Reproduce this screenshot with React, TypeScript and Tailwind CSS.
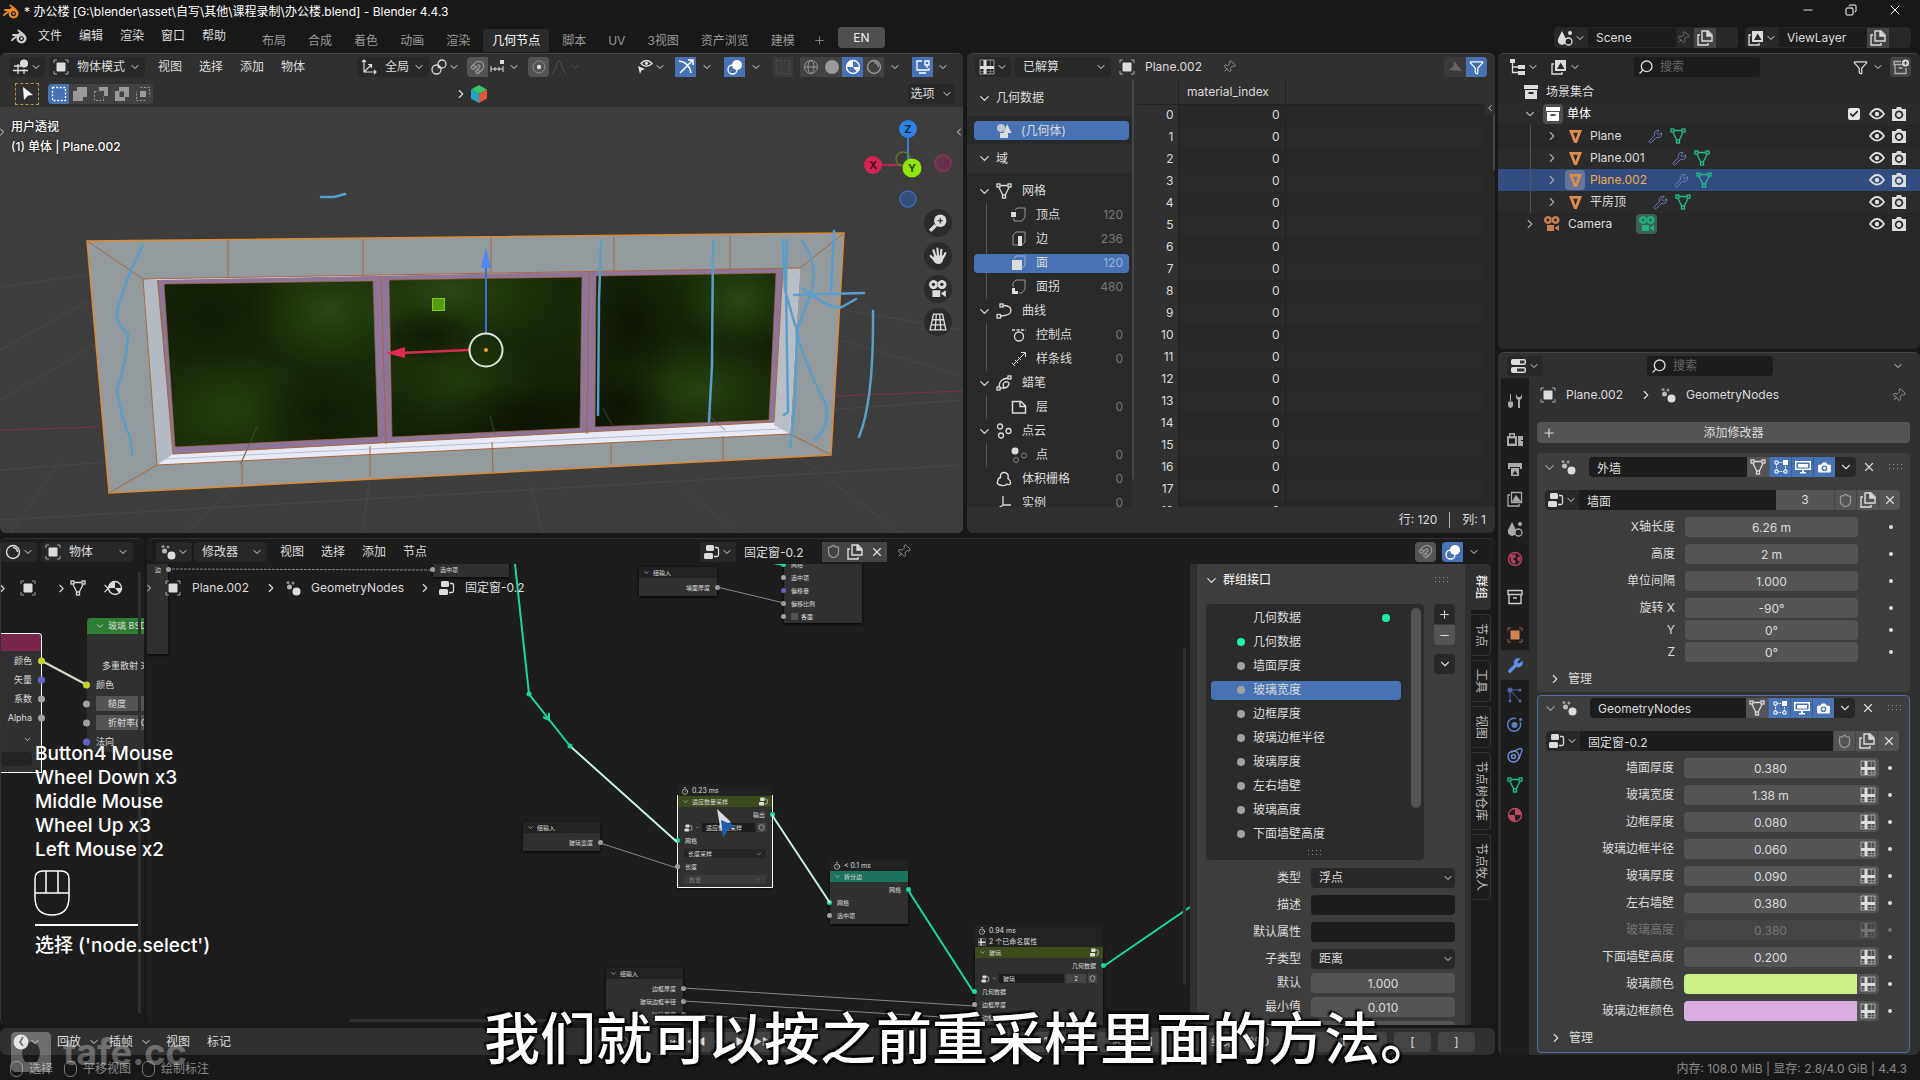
import { useId, type ReactNode } from 'react';
import {
  Camera, Check, ChevronDown, ChevronLeft, ChevronRight, Copy, Filter, Magnet, Minus, Pin,
  Plus, Search, Shield, Timer, Wrench, X,
} from 'lucide-react';

/* ---------- icons ---------- */

const GLYPHS: Record<string, ReactNode> = {
  object: (
    <>
      <path d="M1 4V1h3M12 1h3v3M15 12v3h-3M4 15H1v-3" fill="none" stroke="currentColor" opacity=".7" />
      <rect x="3.500" y="3.500" width="9" height="9" rx="1" />
    </>
  ),
  mesh: (
    <g fill="none" stroke="currentColor" strokeWidth="1.3">
      <path d="M4.5 2.5h7M3 4.500l4 8M13 4.500l-4 8" />
      <rect x="1" y="1" width="3" height="3" />
      <rect x="12" y="1" width="3" height="3" />
      <rect x="6.500" y="12" width="3" height="3" />
    </g>
  ),
  nodes: (
    <>
      <rect x="2" y="1" width="8" height="6" rx="1.500" />
      <rect x="0" y="9" width="9" height="6" rx="1.500" />
      <path d="M11 3.500h2q1.500 0 1.500 1.500v6q0 1.500-1.500 1.500h-3" fill="none" stroke="currentColor" strokeWidth="1.300" />
    </>
  ),
  geo: (
    <>
      <circle cx="3" cy="2.500" r="1.500" opacity=".6" />
      <circle cx="8" cy="3" r="1.500" opacity=".6" />
      <circle cx="4.500" cy="7" r="2.500" opacity=".8" />
      <circle cx="11.500" cy="11.500" r="4" />
    </>
  ),
  grid: (
    <>
      <path d="M1 1h14v14H1z" fill="none" stroke="currentColor" opacity=".6" />
      <path d="M1 12.500h14M11.500 1v14" fill="none" stroke="currentColor" opacity=".35" />
      <path d="M4.500 1h3v14h-3zM1 7h14v3H1z" />
    </>
  ),
  viewport: (
    <>
      <circle cx="11" cy="4.500" r="4" />
      <path d="M1 7h7M0 11.500h15M5 5v10M11 10v5" fill="none" stroke="currentColor" strokeWidth="1.300" />
    </>
  ),
  axes: (
    <path d="M3 1v12h12M3 13L10 6M1 3l2-2 2 2M13 11l2 2-2 2M7 5.500h3.500V9" fill="none" stroke="currentColor" strokeWidth="1.200" />
  ),
  pivot: (
    <g fill="none" stroke="currentColor" strokeWidth="1.300">
      <circle cx="5.500" cy="10.500" r="4.500" />
      <circle cx="11" cy="5" r="4" />
      <circle cx="8" cy="8" r=".8" fill="currentColor" />
    </g>
  ),
  snap: (
    <>
      <path d="M1 7v6M5 8v4M9 8v4M13 7v6M1 10h12" fill="none" stroke="currentColor" />
      <rect x="10" y="1" width="4" height="4" />
    </>
  ),
  target: (
    <>
      <circle cx="8" cy="8" r="6" fill="none" stroke="currentColor" opacity=".4" />
      <circle cx="8" cy="8" r="2.200" />
    </>
  ),
  falloff: <path d="M1 14C6 12 5 2 8 2s2 10 7 12" fill="none" stroke="currentColor" />,
  eyeCursor: (
    <>
      <path d="M4 4.500q5.500-6 11 0-5.500 5.500-11 0z" fill="none" stroke="currentColor" strokeWidth="1.400" />
      <circle cx="9.500" cy="4.300" r="1.600" />
      <path d="M1 7l7 3-3.500 1.500L3 15z" />
    </>
  ),
  gizmo: (
    <path d="M1 2q10 1 12 12M2 14L14 2M10 1h5v5" fill="none" stroke="currentColor" strokeWidth="1.500" />
  ),
  overlay: (
    <>
      <circle cx="10" cy="6" r="5" />
      <circle cx="5.500" cy="10.500" r="4.500" fill="none" stroke="currentColor" strokeWidth="1.300" />
    </>
  ),
  wire: (
    <g fill="none" stroke="currentColor">
      <circle cx="8" cy="8" r="6.500" />
      <ellipse cx="8" cy="8" rx="3" ry="6.500" />
      <path d="M1.500 8h13" />
    </g>
  ),
  solid: <circle cx="8" cy="8" r="7" />,
  matprev: (
    <>
      <circle cx="8" cy="8" r="6.500" fill="none" stroke="currentColor" strokeWidth="1.400" />
      <path d="M8 1.500v6.500H14.500A6.500 6.500 0 0 1 12 13L8 8H1.500A6.500 6.500 0 0 1 8 1.500z" />
    </>
  ),
  rendered: (
    <>
      <circle cx="8" cy="8" r="6.500" fill="none" stroke="currentColor" strokeWidth="1.400" />
      <path d="M8 3.500a5 5 0 0 1 4.500 4.500" fill="none" stroke="currentColor" strokeWidth="1.500" />
    </>
  ),
  screen: (
    <path d="M7 2H2v9h12V9M4 14h7M10 2h4v4h-4zM12 6v3" fill="none" stroke="currentColor" strokeWidth="1.300" />
  ),
  dashed: <rect x="1.500" y="1.500" width="13" height="13" fill="none" stroke="currentColor" strokeWidth="1.300" strokeDasharray="2 1.600" />,
  addSel: <path d="M5 1h10v10h-4v4H1V5h4z" />,
  subSel: (
    <>
      <path d="M6 1h9v9h-4V5H6z" />
      <path d="M1.500 5.500h4M1.500 5.500v9h9v-4" fill="none" stroke="currentColor" strokeDasharray="2 1.500" />
    </>
  ),
  xorSel: <path fillRule="evenodd" d="M5 1h10v10h-4v4H1V5h4zM5.500 5.500v5.500H10V5.500z" />,
  andSel: (
    <>
      <rect x="5" y="5" width="6" height="6" />
      <path d="M5.500 1.500h9v9M10.500 14.500h-9v-9" fill="none" stroke="currentColor" strokeDasharray="2 1.500" />
    </>
  ),
  cursor: <path d="M4 1l10 8-5 .5L5 14z" />,
  outliner: (
    <>
      <rect x="0" y="0" width="5" height="4" />
      <path d="M2.500 4v9.500H8M2.500 8H8" fill="none" stroke="currentColor" strokeWidth="1.300" />
      <rect x="8" y="6" width="7" height="4" />
      <rect x="8" y="12" width="7" height="4" />
    </>
  ),
  images: (
    <>
      <path d="M3 5H1v10h10v-2" fill="none" stroke="currentColor" strokeWidth="1.300" />
      <path fillRule="evenodd" d="M4 1h11v11H4zM6 10h7.500L9.700 3.500z" />
    </>
  ),
  imagesLine: (
    <g fill="none" stroke="currentColor" strokeWidth="1.300">
      <path d="M3 4H1v11h11v-2M4.500 1.500h10v10h-10z" />
      <path d="M6 10l3-5 4 5z" fill="currentColor" />
    </g>
  ),
  scene: (
    <>
      <path d="M5 1l4 8q1 5-4 6-5-1-4-6z" />
      <circle cx="13" cy="3" r="2" />
      <circle cx="11.500" cy="11.500" r="3.500" fill="#222" stroke="currentColor" strokeWidth="1.300" />
    </>
  ),
  collection: (
    <>
      <rect x="1" y="1" width="14" height="4" />
      <path fillRule="evenodd" d="M2 6h12v9H2zM5.500 8h5v2h-5z" />
    </>
  ),
  collectionLine: (
    <path d="M1 1.500h14v4H1zM2 5.500v9h12v-9M6 9h4" fill="none" stroke="currentColor" strokeWidth="1.400" />
  ),
  newCollection: (
    <>
      <path d="M8 2.500H1v3h8M2 5.500v9h11V9M5.500 9h4" fill="none" stroke="currentColor" strokeWidth="1.300" opacity=".7" />
      <circle cx="12.500" cy="4" r="3.500" />
      <path d="M10.500 4h4M12.500 2v4" stroke="#444" />
    </>
  ),
  meshObj: <path fillRule="evenodd" d="M1 1h14L9.500 15h-3zM5.500 4L8 11l2.500-7z" />,
  movie: (
    <>
      <path fillRule="evenodd" d="M4 0a4 4 0 1 0 .1 0zM4 2.500a1.500 1.500 0 1 1-.1 0zM11.500 0a4 4 0 1 0 .1 0zM11.500 2.500a1.500 1.500 0 1 1-.1 0z" />
      <path d="M3 9h7v6H3zM11 11.500l4-2.500v6l-4-2.500z" />
    </>
  ),
  photo: (
    <path fillRule="evenodd" d="M1 3h4l1-2h4l1 2h4v12H1zM8 4.500a4.200 4.200 0 1 0 .1 0zM8 6.300a2.500 2.500 0 1 1-.1 0z" />
  ),
  eye: (
    <>
      <path d="M1 8q7-10 14 0-7 9-14 0z" fill="none" stroke="currentColor" strokeWidth="1.800" />
      <circle cx="8" cy="8" r="2.200" />
    </>
  ),
  hand: (
    <>
      <path d="M5.500 8L4 3M8 7.500L7.500 1.500M10.500 8L11 2.500M12.500 9.500L14.500 5.500M4.500 11L1.500 8" fill="none" stroke="currentColor" strokeWidth="1.900" strokeLinecap="round" />
      <path d="M4.500 7.500h8.500l-.5 4q-1 3.500-4 3.500-3.500 0-5-4z" />
    </>
  ),
  props: (
    <>
      <rect x="0" y="1" width="15" height="6" rx="2" />
      <rect x="0" y="9" width="15" height="6" rx="2" />
      <path d="M9 2.500h4.500v3H9zM6 10.500h7.500v3H6z" fill="#333" />
    </>
  ),
  tool: (
    <>
      <path d="M3.500 1v7M1.500 9h4v4l-2 2-2-2z" stroke="currentColor" />
      <path d="M9 1v4l2 2v8h2V7l2-2V1l-1.500 3h-3z" />
    </>
  ),
  render: (
    <path fillRule="evenodd" d="M0 5h2V2h6v3h2v10H0zM3.500 3.500V5h3V3.500zM2 7.500v5h6v-5zM11 5h5v4h-2v1h2v5h-5z" />
  ),
  output: (
    <path fillRule="evenodd" d="M1 2h14v6h-2V6H3v2H1zM4 7h8v8H4zM5.500 13.500h5L8 9.500z" />
  ),
  world: (
    <>
      <circle cx="8" cy="8" r="6.500" fill="none" stroke="currentColor" strokeWidth="1.500" />
      <path d="M3 4l5-1 1 3-3 2 3 2-2 4-3-4zM11 5l3 2-2 4-2-3z" />
    </>
  ),
  square: (
    <>
      <path d="M1 4V1h3M12 1h3v3M15 12v3h-3M4 15H1v-3" fill="none" stroke="currentColor" opacity=".7" />
      <rect x="3.500" y="3.500" width="9" height="9" />
    </>
  ),
  particles: (
    <>
      <path d="M3 3h9M3 3v10M3 3l9 10" fill="none" stroke="currentColor" />
      <circle cx="3" cy="3" r="2.500" />
      <circle cx="13" cy="3" r="1.500" />
      <circle cx="3" cy="14" r="1.500" />
      <circle cx="13" cy="14" r="1.500" />
    </>
  ),
  physics: (
    <>
      <path d="M13 5a6.500 6.500 0 1 1-4-3.500" fill="none" stroke="currentColor" strokeWidth="1.400" />
      <circle cx="7.500" cy="8" r="3" />
      <circle cx="13.500" cy="2.500" r="1.500" />
    </>
  ),
  constraint: (
    <>
      <path d="M4 5.500L13 1.500q2 0 2 2L12 12" fill="none" stroke="currentColor" strokeWidth="1.300" />
      <circle cx="6.500" cy="9.500" r="5.500" fill="none" stroke="currentColor" strokeWidth="1.400" />
      <circle cx="6.500" cy="9.500" r="2" fill="none" stroke="currentColor" strokeWidth="1.600" />
    </>
  ),
  material: (
    <>
      <circle cx="8" cy="8" r="6.500" fill="none" stroke="currentColor" strokeWidth="1.300" />
      <path d="M8 8V1.500A6.500 6.500 0 0 1 14.500 8zM8 8v6.500A6.500 6.500 0 0 1 1.500 8z" />
    </>
  ),
  editMode: (
    <>
      <path d="M3.500 5v6M5 12.500h6M12.500 11V6M5 3.500h4" fill="none" stroke="currentColor" strokeDasharray="1.500 1" />
      <path d="M2 2h3v3H2zM2 11h3v3H2zM11 11h3v3h-3z" fill="none" stroke="currentColor" />
      <rect x="10" y="1" width="5" height="5" />
    </>
  ),
  monitor: <path fillRule="evenodd" d="M0 2h16v9H0zM1.500 3.500v6h13v-6zM3 5h10v3.500H3zM5 13h6v1.500H5zM7 11h2v2H7z" />,
  duplicate: (
    <g fill="none" stroke="currentColor" strokeWidth="1.400">
      <path d="M5 1h6l4 4v6H5z" />
      <path d="M10 1v5h5" fill="currentColor" />
      <path d="M3 5H1v10h10v-2" />
    </g>
  ),
  shapes: (
    <>
      <circle cx="5" cy="5" r="4" opacity=".8" />
      <path d="M11 1l4.500 9h-8z" />
      <path d="M4 10h8v5H4z" />
    </>
  ),
  vert: (
    <>
      <path d="M4 3l2-2h8v9l-3 4H3v-3" fill="none" stroke="currentColor" opacity=".6" />
      <rect x="0" y="5" width="5" height="5" />
    </>
  ),
  edge: (
    <>
      <path d="M2 14V4l3-3h9v10l-3 3z" fill="none" stroke="currentColor" opacity=".6" />
      <rect x="7" y="5" width="4" height="10" />
    </>
  ),
  face: (
    <>
      <path d="M3 4l2-3h9v9l-2 3" fill="none" stroke="currentColor" opacity=".6" />
      <rect x="1" y="5" width="10" height="10" />
    </>
  ),
  corner: (
    <>
      <path d="M2 8V4l3-3h9v9l-3 4H8" fill="none" stroke="currentColor" opacity=".6" />
      <path d="M1 9h3v3h3v3H1z" />
    </>
  ),
  curve: (
    <g fill="none" stroke="currentColor" strokeWidth="1.300">
      <path d="M7 2.500q8 0 8 5t-10 5.500" />
      <rect x="4" y="1" width="3" height="3" />
      <rect x="1" y="11.500" width="3.500" height="3.500" />
    </g>
  ),
  control: (
    <g fill="none" stroke="currentColor" strokeWidth="1.300">
      <circle cx="8" cy="9.500" r="4.500" />
      <path d="M1 3h14" strokeDasharray="3 1.500" />
    </g>
  ),
  spline: <path d="M2 14L14 2M10 1.500h4.500V6M4 9l3 3M1 12l3 3M7 6l3 3" fill="none" stroke="currentColor" />,
  pencil: (
    <g fill="none" stroke="currentColor" strokeWidth="1.300">
      <path d="M3 12C3 6 6 4 12 3M4 13q8 1 9-4 0-3-4-2-3 1-1 6" />
      <rect x="12" y="1" width="3" height="3" />
      <rect x="1" y="12" width="3" height="3" />
    </g>
  ),
  layer: <path d="M1.500 2.500H10l4.500 4.500v7h-13zM9 2.500v5h5" fill="none" stroke="currentColor" strokeWidth="1.500" />,
  cloud: (
    <g fill="none" stroke="currentColor" strokeWidth="1.300">
      <circle cx="4" cy="3.500" r="2.500" />
      <circle cx="12.500" cy="8" r="2.500" />
      <circle cx="5" cy="12.500" r="2.500" />
    </g>
  ),
  point: (
    <>
      <circle cx="4" cy="4" r="3.500" />
      <g fill="none" stroke="currentColor" opacity=".5">
        <circle cx="13" cy="8.500" r="2.500" />
        <circle cx="5" cy="13" r="2.500" />
      </g>
    </>
  ),
  volume: (
    <path d="M4 14q-4-1-2-4.500Q2 7 4.500 6.500 4 1 9 1.500q4 1 3 6 3 2 2.500 5-1 2-3.500.5-1 2.500-7 1z" fill="none" stroke="currentColor" strokeWidth="1.400" />
  ),
  instance: <path d="M7 1v9M7 10h8M7 10l-6 4" fill="none" stroke="currentColor" strokeWidth="1.300" />,
  zoom: (
    <>
      <circle cx="10" cy="6" r="5.500" />
      <path d="M6 10l-5 5" stroke="currentColor" strokeWidth="3" />
      <path d="M7.500 6h5M10 3.500v5" stroke="#222" />
    </>
  ),
  persp: <path d="M4 1h8l3 14H1zM3 6h10M2 10.500h12M6.500 1L5.500 15M9.500 1l1 14" fill="none" stroke="currentColor" strokeWidth="1.200" />,
  blender: (
    <>
      <path d="M1 11L9 4.500M2 6h8M7.500 1.500l5 4" fill="none" stroke="currentColor" strokeWidth="2" strokeLinecap="round" />
      <path fillRule="evenodd" d="M10.500 4.500a5 5 0 1 0 .1 0zM10.500 7.200a2.500 2.500 0 1 1-.1 0z" />
      <circle cx="10.500" cy="9.600" r="1.300" />
    </>
  ),
  clock: (
    <>
      <circle cx="8" cy="8" r="7.500" />
      <path d="M10 3L7 8l3 4" fill="none" stroke="#333" strokeWidth="1.800" />
    </>
  ),
};

function Icon({ name, className = '' }: { name: string; className?: string }) {
  return (
    <svg viewBox="0 0 16 16" className={`h-4 w-4 shrink-0 ${className}`} fill="currentColor" aria-hidden="true">
      {GLYPHS[name]}
    </svg>
  );
}

const Down = () => <ChevronDown size={12} strokeWidth={2} className="pointer-events-none shrink-0" aria-hidden="true" />;

function Grip() {
  return (
    <svg width="14" height="6" className="shrink-0 text-[#8a8a8a]" fill="currentColor" aria-hidden="true">
      {[0, 4, 8, 12].map((x) => (
        <g key={x}>
          <rect x={x} y="0" width="1" height="1" />
          <rect x={x} y="4" width="1" height="1" />
        </g>
      ))}
    </svg>
  );
}

/* ---------- controls ---------- */

function IconButton({ label, children, className = '' }: { label: string; children: ReactNode; className?: string }) {
  return (
    <button type="button" aria-label={label} className={`flex h-5 shrink-0 items-center justify-center ${className}`}>
      {children}
    </button>
  );
}

function EditorType({ icon, label }: { icon: string; label: string }) {
  return (
    <IconButton label={label} className="w-9 gap-px rounded bg-[#282828]">
      <Icon name={icon} />
      <Down />
    </IconButton>
  );
}

function Dropdown({ label, value, icon, className = '' }: { label: string; value: string; icon?: string; className?: string }) {
  return (
    <div className={`flex h-5 items-center gap-1 rounded bg-[#282828] px-1 ${className}`}>
      {icon && <Icon name={icon} />}
      <select aria-label={label} className="min-w-0 flex-1 appearance-none bg-transparent pl-1 outline-none">
        <option>{value}</option>
      </select>
      <Down />
    </div>
  );
}

function MenuItems({ items }: { items: string[] }) {
  return (
    <nav className="flex shrink-0 gap-[17px] whitespace-nowrap">
      {items.map((item) => (
        <button key={item} type="button">{item}</button>
      ))}
    </nav>
  );
}

/* ---------- top bars ---------- */

function TitleBar() {
  return (
    <header className="flex h-6 items-center bg-[#181818] text-white">
      <Icon name="blender" className="ml-[3px] text-[#ea8a2a]" />
      <h1 className="ml-[5px] flex-1 text-xs font-normal">* 办公楼 [G:\blender\asset\自写\其他\课程录制\办公楼.blend] - Blender 4.4.3</h1>
      <div className="flex items-center gap-[30px] pr-[17px] pb-1">
        <button type="button" aria-label="最小化"><Minus size={14} strokeWidth={1.500} /></button>
        <button type="button" aria-label="还原"><Copy size={12} className="-scale-x-100" /></button>
        <button type="button" aria-label="关闭"><X size={16} strokeWidth={1.500} /></button>
      </div>
    </header>
  );
}

const WORKSPACES = ['布局', '合成', '着色', '动画', '渲染', '几何节点', '脚本', 'UV', '3视图', '资产浏览', '建模'];

function TopBar() {
  return (
    <div className="flex h-[29px] items-start bg-[#181818] pt-[3px]">
      <Icon name="blender" className="mt-0.5 mr-3 ml-[10px] !w-[18px] text-[#ccc]" />
      <div className="-ml-[2px] pt-px">
        <MenuItems items={['文件', '编辑', '渲染', '窗口', '帮助']} />
      </div>
      <div className="ml-[27px] flex h-[25px] items-end gap-[4px] text-[#999]">
        {WORKSPACES.map((name) => (
          <button
            key={name}
            type="button"
            className={name === '几何节点' ? 'h-[23px] rounded-t bg-[#2b2b2b] px-[9px] whitespace-nowrap text-white' : 'h-[23px] px-[9px] whitespace-nowrap'}
          >
            {name}
          </button>
        ))}
        <button type="button" aria-label="添加工作区" className="flex h-[23px] w-6 items-center justify-center"><Plus size={13} strokeWidth={1.500} /></button>
      </div>
      <button type="button" className="ml-[6px] h-[21px] w-[47px] rounded bg-[#4f4f4f] text-[#eee]">EN</button>
      <div className="ml-auto flex gap-[7px] pr-[9px]">
        <div className="flex h-[21px] items-center rounded bg-[#282828]">
          <IconButton label="场景" className="w-[34px] gap-px"><Icon name="scene" /><Down /></IconButton>
          <input aria-label="场景名称" defaultValue="Scene" className="h-[19px] w-[88px] bg-[#1d1d1d] px-2 outline-none" />
          <Pin size={14} strokeWidth={1.500} className="rotate-45 text-[#777]" />
          <IconButton label="新建场景" className="ml-[4px] w-[22px] bg-[#444]"><Icon name="duplicate" /></IconButton>
          <span className="w-[22px]" />
        </div>
        <div className="flex h-[21px] items-center rounded bg-[#282828]">
          <IconButton label="视图层" className="w-[34px] gap-px"><Icon name="images" /><Down /></IconButton>
          <input aria-label="视图层名称" defaultValue="ViewLayer" className="h-[19px] w-[88px] bg-[#1d1d1d] px-2 outline-none" />
          <IconButton label="新建视图层" className="w-[22px] bg-[#444]"><Icon name="duplicate" /></IconButton>
          <span className="w-[22px]" />
        </div>
      </div>
    </div>
  );
}

/* ---------- 3D viewport ---------- */

function Scene() {
  return (
    <svg viewBox="0 107 963 426" preserveAspectRatio="xMidYMid slice" className="absolute inset-0 h-full w-full" aria-label="固定窗模型">
      <defs>
        <linearGradient id="glassA" x1="0" y1="0" x2="1" y2="1">
          <stop offset="0" stopColor="#142006" />
          <stop offset=".45" stopColor="#182a08" />
          <stop offset=".75" stopColor="#101a04" />
          <stop offset="1" stopColor="#182a08" />
        </linearGradient>
        <radialGradient id="leaf">
          <stop offset="0" stopColor="#2a4713" />
          <stop offset="1" stopColor="#2a4713" stopOpacity="0" />
        </radialGradient>
        <radialGradient id="shade">
          <stop offset="0" stopColor="#0c1203" />
          <stop offset="1" stopColor="#0c1203" stopOpacity="0" />
        </radialGradient>
        <clipPath id="panes">
          <path d="M164 284L373 281 378 437 175 447zM389 280L582 277 580 428 392 437zM596 276L776 273 769 420 595 427z" />
        </clipPath>
      </defs>
      <rect x="-400" y="107" width="1800" height="426" fill="#3d3d3d" />
      <g stroke="#484848" fill="none">
        <path d="M0 287L87 275M0 470L963 400M0 520L963 465M60 460L10 533M242 480L185 533M370 478L362 533M530 484L543 533M675 480L737 533M790 450L900 533M840 340L963 376M845 310L963 330M0 400L95 345M0 350L90 300" />
      </g>
      <path d="M0 430L100 427M836 396L963 391" stroke="#7d3345" />
      <path d="M87 241L844 233 831 455 109 493z" fill="#949b9e" />
      <path d="M143 279L800 268 790 434 157 465z" fill="#e8eaf5" />
      <path d="M143 279L158 280 173 454 157 465z" fill="#b3bac2" />
      <path d="M783 268L800 268 790 434 774 425z" fill="#b9bdc6" />
      <path d="M157 280L783 268 774 422 173 454z" fill="#8d769a" />
      <g clipPath="url(#panes)">
        <rect x="150" y="270" width="640" height="190" fill="url(#glassA)" />
        <ellipse cx="330" cy="310" rx="80" ry="60" fill="url(#leaf)" />
        <ellipse cx="230" cy="410" rx="90" ry="60" fill="url(#leaf)" opacity=".7" />
        <ellipse cx="450" cy="290" rx="110" ry="55" fill="url(#leaf)" />
        <ellipse cx="460" cy="380" rx="80" ry="50" fill="url(#leaf)" opacity=".6" />
        <ellipse cx="700" cy="390" rx="110" ry="60" fill="url(#leaf)" opacity=".9" />
        <ellipse cx="740" cy="300" rx="60" ry="50" fill="url(#leaf)" />
        <ellipse cx="210" cy="320" rx="70" ry="50" fill="url(#shade)" opacity=".5" />
        <ellipse cx="320" cy="410" rx="70" ry="45" fill="url(#shade)" opacity=".6" />
        <ellipse cx="430" cy="335" rx="50" ry="30" fill="url(#shade)" opacity=".7" />
        <ellipse cx="630" cy="320" rx="55" ry="80" fill="url(#shade)" opacity=".9" />
        <ellipse cx="530" cy="415" rx="80" ry="35" fill="url(#shade)" opacity=".8" />
        <ellipse cx="620" cy="405" rx="50" ry="40" fill="url(#shade)" />
      </g>
      <path d="M165 459L780 429" stroke="#b6bfd8" />
      <g stroke="#a5673c" fill="none">
        <path d="M164 284L373 281 378 437 175 447zM389 280L582 277 580 428 392 437zM596 276L776 273 769 420 595 427z" opacity=".7" />
        <path d="M143 279L800 268M143 279L157 465 790 434M158 280L173 454 774 422 783 268M381 276L386 444M589 273L587 434" />
        <path d="M87 241L143 279M844 233L800 268M831 455L790 434M109 493L157 465M228 240V277M363 239V275M491 238V272M614 237V271M730 236V269M247 450L242 461V485M370 446V477M492 442L493 472M611 443V464M723 436V460" />
      </g>
      <path d="M87 241L844 233 831 455 109 493z" fill="none" stroke="#d98a35" strokeWidth="1.500" />
      <path d="M257 427L240 465M490 416L495 435M603 408L612 425M705 412L725 430" stroke="#5d5d50" opacity=".6" />
      <g stroke="#5a9fca" strokeWidth="2.500" fill="none" strokeLinecap="round" strokeLinejoin="round">
        <path d="M143 245Q125 280 116 315 119 326 128 334 127 360 117 390 120 415 131 440L132 455" />
        <path d="M601 241L599 300 598 415M713 241L712 365 709 422M783 240L785 290 795 325M787 240L786 290 788 412 784 415" />
        <path d="M802 241Q820 265 810 295L797 330 795 400 790 448M834 231L831 290" />
        <path d="M794 295L864 293M802 288Q830 310 842 307L856 299M796 325Q798 350 826 405 830 425 815 440M873 311Q874 400 859 437M321 197L334 197 345 194" />
      </g>
      <path d="M486 333V266" stroke="#3b6fc9" strokeWidth="2" />
      <path d="M486 248L491 268H481z" fill="#4f86f7" />
      <path d="M469 350L400 353" stroke="#d42a50" strokeWidth="2.500" />
      <path d="M386 353L405 347V358z" fill="#e02a50" />
      <rect x="432.500" y="298.500" width="12" height="12" fill="#569c10" stroke="#7ecb22" />
      <circle cx="486" cy="350" r="16.500" fill="none" stroke="#dfe5dc" strokeWidth="2" />
      <circle cx="486" cy="350" r="2" fill="#f29a3c" />
    </svg>
  );
}

function AxisGizmo() {
  return (
    <svg viewBox="860 116 96 96" className="h-24 w-24 font-bold" fontSize="11" textAnchor="middle">
      <path d="M908 138V168" stroke="#3a7fd0" strokeWidth="2" />
      <path d="M882 165H912" stroke="#b02850" strokeWidth="2" />
      <circle cx="903" cy="159" r="7" fill="none" stroke="#5f7a2a" strokeWidth="1.500" />
      <circle cx="943" cy="163" r="8" fill="#66304a" stroke="#8a3556" strokeWidth="1.500" />
      <circle cx="908" cy="199" r="8" fill="#34507a" stroke="#3a6bb0" strokeWidth="1.500" />
      <circle cx="908" cy="129" r="9" fill="#2f82e0" />
      <circle cx="873" cy="165" r="9" fill="#d42456" />
      <circle cx="912" cy="168" r="9.500" fill="#8ee60c" />
      <text x="908" y="133" fill="#0c2746">Z</text>
      <text x="873" y="169" fill="#4b0a1c">X</text>
      <text x="912" y="172" fill="#2a4703">Y</text>
    </svg>
  );
}

function ShadeButton({ icon, label, on = false }: { icon: string; label: string; on?: boolean }) {
  return (
    <IconButton label={label} className={on ? 'w-[21px] bg-[#4772b3] text-white' : 'w-[21px] bg-[#424242] text-[#999]'}>
      <Icon name={icon} />
    </IconButton>
  );
}

const NAV_BUTTONS = [
  { icon: 'zoom', label: '缩放' },
  { icon: 'hand', label: '平移' },
  { icon: 'movie', label: '摄像机视图' },
  { icon: 'persp', label: '透视/正交' },
];

function Viewport() {
  return (
    <section className="flex min-w-0 flex-[963] flex-col overflow-hidden rounded-md bg-[#3d3d3d]">
      <div className="border-t border-[#454545] bg-[#303030]">
        <div className="flex h-[26px] items-center pr-[10px] pl-[9px]">
          <EditorType icon="viewport" label="3D 视图" />
          <Dropdown label="模式" value="物体模式" icon="object" className="mr-[13px] ml-[4px] w-[96px]" />
          <MenuItems items={['视图', '选择', '添加', '物体']} />
          <div className="ml-[52px] flex items-center">
            <Dropdown label="变换坐标系" value="全局" icon="axes" className="w-[72px]" />
            <IconButton label="轴心点" className="w-[32px] gap-px"><Icon name="pivot" /><Down /></IconButton>
            <IconButton label="吸附" className="ml-[6px] w-[21px] rounded-l bg-[#545454] text-[#999]"><Magnet size={15} /></IconButton>
            <IconButton label="吸附至" className="mr-[6px] w-[34px] gap-0.5"><Icon name="snap" /><Down /></IconButton>
            <IconButton label="衰减编辑" className="w-[21px] rounded bg-[#545454]"><Icon name="target" /></IconButton>
            <IconButton label="衰减类型" className="w-[34px] gap-0.5 text-[#555]"><Icon name="falloff" /><Down /></IconButton>
          </div>
          <div className="ml-auto flex items-center">
            <IconButton label="可选性与可见性" className="mr-[6px] w-[36px] gap-px"><Icon name="eyeCursor" /><Down /></IconButton>
            <ShadeButton icon="gizmo" label="显示 Gizmo" on />
            <IconButton label="Gizmo 选项" className="mr-[7px] w-[21px]"><Down /></IconButton>
            <ShadeButton icon="overlay" label="显示叠加层" on />
            <IconButton label="叠加层选项" className="mr-[7px] w-[21px]"><Down /></IconButton>
            <IconButton label="透视模式" className="mr-[7px] w-5 bg-[#3a3a3a] text-[#4c4c4c]"><Icon name="dashed" /></IconButton>
            <ShadeButton icon="wire" label="线框" />
            <ShadeButton icon="solid" label="实体" />
            <ShadeButton icon="matprev" label="材质预览" on />
            <ShadeButton icon="rendered" label="渲染" />
            <IconButton label="着色选项" className="mr-[6px] w-[22px]"><Down /></IconButton>
            <ShadeButton icon="screen" label="同步" on />
            <IconButton label="同步选项" className="w-5"><Down /></IconButton>
          </div>
        </div>
        <div className="flex h-[27px] items-center pr-[8px] pl-4">
          <IconButton label="框选工具" className="w-[22px] outline-1 outline-dashed outline-[#b8923c]"><Icon name="cursor" className="text-white" /></IconButton>
          <div className="ml-[10px] flex overflow-hidden rounded">
            <ShadeButton icon="dashed" label="设置选择" on />
            <ShadeButton icon="addSel" label="扩展选择" />
            <ShadeButton icon="subSel" label="减去选择" />
            <ShadeButton icon="xorSel" label="反转选择" />
            <ShadeButton icon="andSel" label="相交选择" />
          </div>
          <ChevronRight size={14} className="ml-[301px]" />
          <svg width="16" height="18" viewBox="0 0 16 18" className="ml-[3px]" aria-hidden="true">
            <path d="M8 0l8 4.500L8 9 0 4.500z" fill="#35c46a" />
            <path d="M0 4.500L8 9v9l-8-4.500z" fill="#23a6c0" />
            <path d="M16 4.500L8 9v9l8-4.500z" fill="#e2553a" />
          </svg>
          <button type="button" className="ml-auto flex h-5 w-[47px] items-center justify-center gap-[6px] rounded bg-[#282828] whitespace-nowrap">选项<Down /></button>
        </div>
      </div>
      <div className="relative min-h-0 flex-1">
        <Scene />
        <div className="absolute top-[10px] left-[11px] font-medium text-white [text-shadow:0_0_2px_#000]">
          <p className="leading-5">用户透视</p>
          <p className="leading-5">(1) 单体 | Plane.002</p>
        </div>
        <div className="absolute top-[9px] right-[7px]"><AxisGizmo /></div>
        <div className="absolute top-[102px] right-[11px] flex flex-col gap-[5px]">
          {NAV_BUTTONS.map((b) => (
            <button key={b.icon} type="button" aria-label={b.label} className="flex h-7 w-7 items-center justify-center rounded-full bg-[#2b2b2b]">
              <Icon name={b.icon} className="!h-[18px] !w-[18px]" />
            </button>
          ))}
        </div>
        <ChevronRight size={12} className="absolute top-[19px] -left-1" />
        <ChevronLeft size={12} className="absolute top-[19px] -right-0.5" />
      </div>
    </section>
  );
}

/* ---------- spreadsheet ---------- */

const DOMAINS: { label: string; icon: string; count?: number; child?: boolean }[] = [
  { label: '网格', icon: 'mesh' },
  { label: '顶点', icon: 'vert', count: 120, child: true },
  { label: '边', icon: 'edge', count: 236, child: true },
  { label: '面', icon: 'face', count: 120, child: true },
  { label: '面拐', icon: 'corner', count: 480, child: true },
  { label: '曲线', icon: 'curve' },
  { label: '控制点', icon: 'control', count: 0, child: true },
  { label: '样条线', icon: 'spline', count: 0, child: true },
  { label: '蜡笔', icon: 'pencil' },
  { label: '层', icon: 'layer', count: 0, child: true },
  { label: '点云', icon: 'cloud' },
  { label: '点', icon: 'point', count: 0, child: true },
  { label: '体积栅格', icon: 'volume', count: 0 },
  { label: '实例', icon: 'instance', count: 0 },
];

function Spreadsheet() {
  const rows = Array.from({ length: 19 }, (_, i) => i);
  return (
    <section className="flex min-w-0 flex-[528] flex-col overflow-hidden rounded-md border-t border-[#454545] bg-[#303030]">
      <div className="flex h-[26px] shrink-0 items-center pr-2 pl-2">
        <EditorType icon="grid" label="电子表格" />
        <Dropdown label="求值状态" value="已解算" className="mr-2 ml-[4px] w-[96px]" />
        <Icon name="object" />
        <span className="ml-[10px]">Plane.002</span>
        <Pin size={14} strokeWidth={1.500} className="ml-5 rotate-45 text-[#999]" />
        <IconButton label="仅选中项" className="ml-auto w-[22px] rounded-l bg-[#3a3a3a] text-[#666]"><Icon name="cursor" className="-scale-x-100 rotate-90" /></IconButton>
        <IconButton label="启用过滤" className="w-[21px] rounded-r bg-[#4772b3] text-white"><Filter size={15} /></IconButton>
      </div>
      <div className="flex min-h-0 flex-1">
        <aside className="w-[165px] shrink-0 overflow-hidden">
          <button type="button" className="flex h-9 items-center gap-1 pl-[10px]"><ChevronDown size={15} />几何数据</button>
          <div className="bg-[#2a2a2a] px-[7px] pt-[5px] pb-1">
            <button type="button" className="flex h-[19px] w-[155px] items-center gap-[9px] rounded-sm bg-[#4772b3] pl-[22px]"><Icon name="shapes" />(几何体)</button>
          </div>
          <button type="button" className="flex h-[29px] items-center gap-1 pl-[10px]"><ChevronDown size={15} />域</button>
          <ul className="bg-[#2a2a2a] pt-[6px] pl-[7px]">
            {DOMAINS.map((d) => (
              <li key={d.label} className={d.child ? 'ml-3 flex h-6 items-center border-l border-[#555]' : 'flex h-6 items-center'}>
                <button
                  type="button"
                  className={`flex h-[19px] items-center rounded-sm pr-[6px] text-left ${d.label === '面' ? 'bg-[#4772b3]' : ''} ${d.child ? '-ml-[13px] w-[155px] pl-[37px]' : 'w-[155px] pl-[3px]'}`}
                >
                  {!d.child && (d.count === undefined ? <ChevronDown size={15} className="mr-[4px]" /> : <span className="w-[19px]" />)}
                  <Icon name={d.icon} className={d.child ? 'mr-[9px]' : 'mr-[10px]'} />
                  <span className="flex-1">{d.label}</span>
                  {d.count !== undefined && <span className={d.label === '面' ? 'text-[#9db4d8]' : 'text-[#777]'}>{d.count}</span>}
                </button>
              </li>
            ))}
          </ul>
        </aside>
        <div className="mr-[3px] mb-7 w-[2px] shrink-0 bg-[#454545]" />
        <div className="min-w-0 flex-1 overflow-hidden bg-[#282828]">
          <table className="w-full table-fixed border-collapse text-right">
            <thead>
              <tr className="h-6 border-b border-[#222] bg-[#303030]">
                <th className="w-[41px]" aria-label="索引" />
                <th className="w-[107px] border-x border-[#222] pr-[7px] text-center font-normal">material_index</th>
                <th aria-label="空" />
              </tr>
            </thead>
            <tbody>
              {rows.map((i) => (
                <tr key={i} className="h-[22px] odd:bg-[#282828] even:bg-[#2a2a2a]">
                  <th scope="row" className="bg-[#303030] pr-[4px] font-normal">{i}</th>
                  <td className="border-x border-[#222] pr-[5px]">0</td>
                  <td />
                </tr>
              ))}
            </tbody>
          </table>
        </div>
        <div className="w-[10px] shrink-0 bg-[#282828]">
          <div className="flex h-[34px] items-end justify-center bg-[#303030]"><ChevronLeft size={12} /></div>
          <div className="ml-auto h-14 w-[2px] bg-[#454545]" />
        </div>
      </div>
      <footer className="flex h-[26px] shrink-0 items-center justify-end gap-3 pr-[9px]">
        <span>行: 120</span><span className="h-4 w-px bg-[#aaa]" /><span>列: 1</span>
      </footer>
    </section>
  );
}

/* ---------- shader editor ---------- */

function Socket({ color, side }: { color: string; side: 'left' | 'right' }) {
  return (
    <i
      className={`absolute top-1/2 h-[7px] w-[7px] -translate-y-1/2 rounded-full ${side === 'left' ? '-left-[4px]' : '-right-[4px]'}`}
      style={{ background: color }}
    />
  );
}

function ShaderEditor() {
  return (
    <section className="relative flex w-36 shrink-0 flex-col overflow-hidden rounded-md border-t border-l border-[#333] bg-[#1d1d1d]">
      <div className="flex h-[25px] shrink-0 items-center">
        <EditorType icon="rendered" label="着色器编辑器" />
        <Dropdown label="着色器类型" value="物体" icon="object" className="ml-[4px] w-[92px]" />
      </div>
      <div className="relative min-h-0 flex-1">
        <div className="flex h-[48px] items-center overflow-hidden">
          <ChevronRight size={13} className="-ml-[5px] shrink-0" />
          <Icon name="object" className="ml-[11px]" />
          <ChevronRight size={13} className="ml-[19px] shrink-0" />
          <Icon name="mesh" className="ml-[2px]" />
          <ChevronRight size={13} className="ml-[14px] shrink-0" />
          <Icon name="matprev" className="-ml-[6px]" />
        </div>
        <svg className="absolute inset-0 h-full w-full" aria-hidden="true">
          <path d="M41 97L86 121" stroke="#d8d8c8" strokeWidth="2" />
        </svg>
        <div className="absolute top-[69px] left-0 h-[140px] w-[41px] rounded-tr border border-l-0 border-white bg-[#303030] text-[9px]">
          <div className="h-[17px] rounded-tr bg-[#79264a]" />
          {[['颜色', '#c7d22c'], ['矢量', '#6363c7'], ['系数', '#a1a1a1'], ['Alpha', '#a1a1a1']].map(([t, c]) => (
            <div key={t} className="relative h-[19px] pr-[9px] text-right leading-[19px]">{t}<Socket color={c} side="right" /></div>
          ))}
          <ChevronDown size={9} className="mt-[8px] mr-[9px] ml-auto" />
          <div className="mt-2 mr-[9px] h-[14px] rounded-sm bg-[#242424]" />
        </div>
        <div className="absolute top-[54px] left-[86px] h-[134px] w-[80px] rounded-tl bg-[#303030] text-[9px] whitespace-nowrap">
          <div className="flex h-4 items-center gap-[3px] rounded-tl bg-[#2f7d33] pl-2"><ChevronDown size={10} />玻璃 BSDF</div>
          <div className="mt-[22px] h-[19px] pl-[15px] leading-[19px]">多重散射GGX</div>
          <div className="relative h-[19px] pl-[9px] leading-[19px]">颜色<Socket color="#c7d22c" side="left" /></div>
          {['糙度', '折射率(IOR)'].map((t) => (
            <div key={t} className="relative h-[19px] py-[2px] pl-[9px]"><div className="bg-[#545454] pl-3 leading-[15px]">{t}</div><Socket color="#a1a1a1" side="left" /></div>
          ))}
          <div className="relative h-[19px] pl-[9px] leading-[19px]">法向<Socket color="#6363c7" side="left" /></div>
        </div>
        <div className="absolute top-2 right-[3px] bottom-3 w-[3px] bg-[#303030]" />
      </div>
    </section>
  );
}

/* ---------- geometry node editor ---------- */

interface NodeRow { text?: string; side?: 'in' | 'out'; color?: string; field?: 'tree' | 'menu' | 'off' | 'check' }
interface NodeData { id: string; x: number; y: number; w: number; h: number; title?: string; head?: string; info?: string[]; group?: boolean; selected?: boolean; users?: number; lead?: number; rows: NodeRow[] }

const GEO = '#1bd6a0';
const VAL = '#a1a1a1';

const NODES: NodeData[] = [
  { id: 'edge', x: 0, y: -1, w: 21, h: 91, rows: [{ text: '边', side: 'out', color: VAL }] },
  { id: 'sel', x: 286, y: -1, w: 76, h: 14, rows: [{ text: '选中项', side: 'in', color: VAL }] },
  { id: 'wall', x: 492, y: 3, w: 78, h: 29, title: '组输入', head: '#222', lead: 3, rows: [{ text: '墙面厚度', side: 'out', color: VAL }] },
  {
    id: 'extrude', x: 637, y: -6, w: 78, h: 65,
    rows: [
      { text: '网格', side: 'in', color: GEO }, { text: '选中项', side: 'in', color: VAL }, { text: '偏移量', side: 'in', color: '#6363c7' },
      { text: '偏移比例', side: 'in', color: VAL }, { text: '各面', side: 'in', color: VAL, field: 'check' },
    ],
  },
  { id: 'glassWidth', x: 376, y: 258, w: 77, h: 29, title: '组输入', head: '#222', lead: 3, rows: [{ text: '玻璃宽度', side: 'out', color: VAL }] },
  {
    id: 'sample', x: 531, y: 232, w: 94, h: 91, title: '适应数量采样', head: '#3b4b1e', info: ['0.23 ms'], group: true, selected: true, lead: 1,
    rows: [
      { text: '输出', side: 'out', color: GEO }, { text: '适应数量采样', field: 'tree' }, { text: '网格', side: 'in', color: GEO },
      { text: '长度采样', field: 'menu' }, { text: '长度', side: 'in', color: VAL }, { text: '数量', field: 'off' },
    ],
  },
  {
    id: 'split', x: 683, y: 307, w: 78, h: 53, title: '拆分边', head: '#1d725e', info: ['< 0.1 ms'], lead: 1,
    rows: [{ text: '网格', side: 'out', color: GEO }, { text: '网格', side: 'in', color: GEO }, { text: '选中项', side: 'in', color: VAL }],
  },
  {
    id: 'glass', x: 828, y: 383, w: 128, h: 110, title: '玻璃', head: '#3b4b1e', info: ['0.94 ms', '2 个已命名属性'], group: true, users: 2, lead: 1,
    rows: [
      { text: '几何数据', side: 'out', color: GEO }, { text: '玻璃', field: 'tree' }, { text: '几何数据', side: 'in', color: GEO },
      { text: '边框厚度', side: 'in', color: VAL }, { text: '边框半径', side: 'in', color: VAL },
    ],
  },
  {
    id: 'frame', x: 459, y: 404, w: 77, h: 90, title: '组输入', head: '#222', lead: 3,
    rows: [{ text: '边框厚度', side: 'out', color: VAL }, { text: '玻璃边框半径', side: 'out', color: VAL }, { text: '玻璃厚度', side: 'out', color: VAL }],
  },
];

function NodeRowView({ row, users }: { row: NodeRow; users?: number }) {
  if (row.field === 'tree') {
    return (
      <div className="flex h-[13px] items-center gap-[2px] px-[6px] py-[2px]">
        <Icon name="nodes" className="!h-[8px] !w-[9px]" />
        <ChevronDown size={5} />
        <span className="flex-1 overflow-hidden bg-[#1d1d1d] px-[4px] leading-[9px]">{row.text}</span>
        {users && <span className="w-[20px] bg-[#444] text-center leading-[9px]">{users}</span>}
        <span className="bg-[#444] p-px"><Shield size={7} /></span>
      </div>
    );
  }
  if (row.field === 'menu' || row.field === 'off') {
    return (
      <div className="h-[13px] px-[6px] py-[2px]">
        <div className={row.field === 'off' ? 'flex items-center justify-between bg-[#3a3a3a] px-[5px] leading-[9px] text-[#777]' : 'flex items-center justify-between bg-[#262626] px-[4px] leading-[9px]'}>
          {row.text}<ChevronDown size={6} />
        </div>
      </div>
    );
  }
  return (
    <div className={row.side === 'out' ? 'relative h-[13px] px-[7px] text-right leading-[13px]' : 'relative flex h-[13px] items-center gap-[3px] px-[7px]'}>
      {row.field === 'check' && <span className="h-[7px] w-[7px] bg-[#545454]" />}
      {row.text}
      <i
        className={`absolute top-[4px] h-[5px] w-[5px] rounded-full ${row.side === 'out' ? '-right-[3px]' : '-left-[3px]'}`}
        style={{ background: row.color }}
      />
    </div>
  );
}

function GraphNode({ node }: { node: NodeData }) {
  return (
    <article className="absolute text-[6px] whitespace-nowrap shadow-[0_1px_3px_#000]" style={{ left: node.x, top: node.y, width: node.w, height: node.h }}>
      {node.info && (
        <div className="absolute bottom-full left-0 w-full bg-[#222] pl-[3px]">
          {node.info.map((line, i) => (
            <div key={line} className="flex h-[11px] items-center gap-[3px] text-[7px]">
              {i === 0 ? <Timer size={8} /> : <Icon name="grid" className="!h-[8px] !w-[8px]" />}{line}
            </div>
          ))}
        </div>
      )}
      <div className={node.selected ? 'h-full bg-[#303030] outline-1 outline-white' : 'h-full bg-[#303030]'}>
        {node.title && (
          <div className="flex h-[11px] items-center gap-[3px] px-[4px]" style={{ background: node.head, marginBottom: node.lead }}>
            <ChevronDown size={7} /><span className="flex-1">{node.title}</span>
            {node.group && <Icon name="nodes" className="!h-[9px] !w-[9px]" />}
          </div>
        )}
        {node.rows.map((row, i) => <NodeRowView key={i} row={row} users={node.users} />)}
      </div>
    </article>
  );
}

const INTERFACE_ITEMS = ['几何数据', '墙面厚度', '玻璃宽度', '边框厚度', '玻璃边框半径', '玻璃厚度', '左右墙壁', '玻璃高度', '下面墙壁高度'];

const SIDE_TABS = [
  { name: '群组', size: 'h-[46px]' },
  { name: '节点', size: 'h-[42px]' },
  { name: '工具', size: 'h-[42px]' },
  { name: '视图', size: 'h-[42px]' },
  { name: '节点树仓库', size: 'h-[78px]' },
  { name: '节点牧人', size: 'h-[66px]' },
];

function SideField({ label, value, kind }: { label: string; value?: string; kind: 'select' | 'text' | 'number' }) {
  const id = useId();
  return (
    <div className="flex h-5 shrink-0 items-center gap-[10px] pr-[10px]">
      <label htmlFor={id} className="flex-1 text-right">{label}</label>
      {kind === 'select' ? (
        <div className="flex h-5 w-36 items-center rounded bg-[#282828] pr-[1px]">
          <select id={id} className="flex-1 appearance-none pl-2 outline-none"><option>{value}</option></select>
          <Down />
        </div>
      ) : (
        <input
          id={id}
          defaultValue={value}
          className={kind === 'text' ? 'h-5 w-36 rounded bg-[#1d1d1d] outline-none' : 'h-5 w-36 rounded bg-[#545454] text-center outline-none'}
        />
      )}
    </div>
  );
}

function NodeSidebar() {
  return (
    <aside className="flex w-[305px] shrink-0 overflow-hidden bg-[#303030]">
      <div className="ml-[7px] flex w-[268px] shrink-0 flex-col bg-[#3d3d3d]">
        <div className="flex h-[32px] shrink-0 items-center gap-[4px] pr-4 pl-[7px]">
          <ChevronDown size={15} /><h2 className="flex-1 text-white">群组接口</h2><Grip />
        </div>
        <div className="mt-[8px] flex shrink-0 pl-[9px]">
          <div className="flex h-[256px] w-[218px] flex-col rounded bg-[#2b2b2b]">
            <div className="flex flex-1">
              <ul className="w-[195px] pt-[2px] pl-[5px]">
                <li className="flex h-6 items-center pr-[11px] pl-[42px]">
                  <span className="flex-1">几何数据</span><i className="h-2 w-2 rounded-full bg-[#1df2a8]" />
                </li>
                {INTERFACE_ITEMS.map((name, i) => (
                  <li key={name} className="flex h-6 items-center">
                    <button type="button" className={`flex h-[19px] w-full items-center gap-2 rounded-sm pl-[26px] ${name === '玻璃宽度' ? 'bg-[#4772b3]' : ''}`}>
                      <i className={i === 0 ? 'h-2 w-2 rounded-full bg-[#1df2a8]' : 'h-2 w-2 rounded-full bg-[#a1a1a1]'} />
                      {name}
                    </button>
                  </li>
                ))}
              </ul>
              <div className="mt-1 ml-[10px] h-[200px] w-[10px] rounded-full bg-[#545454]" />
            </div>
            <div className="flex justify-center pb-[4px]"><Grip /></div>
          </div>
          <div className="ml-[10px] flex flex-col">
            <IconButton label="添加项" className="w-[21px] rounded-t bg-[#282828]"><Plus size={13} /></IconButton>
            <IconButton label="移除项" className="mt-px w-[21px] rounded-b bg-[#545454]"><Minus size={13} /></IconButton>
            <IconButton label="更多" className="mt-[9px] w-[21px] rounded bg-[#282828]"><ChevronDown size={14} /></IconButton>
          </div>
        </div>
        <div className="mt-[8px] flex flex-col gap-[7px]">
          <SideField label="类型" value="浮点" kind="select" />
          <SideField label="描述" kind="text" />
          <SideField label="默认属性" kind="text" />
          <SideField label="子类型" value="距离" kind="select" />
        </div>
        <div className="mt-1 flex flex-col gap-1">
          <SideField label="默认" value="1.000" kind="number" />
          <SideField label="最小值" value="0.010" kind="number" />
          <SideField label="最大值" value="inf" kind="number" />
        </div>
      </div>
      <div className="ml-[6px] flex flex-1 flex-col gap-1 bg-[#1a1a1a]">
        {SIDE_TABS.map((tab, i) => (
          <button
            key={tab.name}
            type="button"
            className={`flex w-5 shrink-0 items-center justify-center rounded-r border border-l-0 whitespace-nowrap [text-orientation:sideways] [writing-mode:vertical-rl] ${tab.size} ${i === 0 ? 'border-[#303030] bg-[#303030] text-white' : 'border-[#333] bg-[#1d1d1d] text-[#bbb]'}`}
          >
            {tab.name}
          </button>
        ))}
      </div>
    </aside>
  );
}

function NodeEditor() {
  return (
    <section className="flex min-w-0 flex-1 flex-col overflow-hidden rounded-md border-t border-[#333] bg-[#1d1d1d]">
      <div className="relative flex h-[25px] shrink-0 items-center pr-[10px] pl-[9px]">
        <EditorType icon="geo" label="几何节点编辑器" />
        <Dropdown label="节点树类型" value="修改器" className="mr-[13px] ml-[2px] w-[73px]" />
        <MenuItems items={['视图', '选择', '添加', '节点']} />
        <div className="absolute left-[553px] flex items-center">
          <IconButton label="浏览节点树" className="w-[36px] gap-px bg-[#282828]"><Icon name="nodes" /><Down /></IconButton>
          <input aria-label="节点树名称" defaultValue="固定窗-0.2" className="h-5 w-[86px] bg-[#1d1d1d] pb-px pl-[8px] outline-none" />
          <IconButton label="伪用户" className="w-[22px] bg-[#444] text-[#999]"><Shield size={15} /></IconButton>
          <IconButton label="新建节点树" className="w-[22px] bg-[#444]"><Icon name="duplicate" /></IconButton>
          <IconButton label="断开" className="w-[21px] bg-[#444]"><X size={14} /></IconButton>
          <Pin size={15} strokeWidth={1.500} className="ml-[9px] rotate-45 text-[#999]" />
        </div>
        <IconButton label="吸附" className="ml-auto w-[21px] rounded bg-[#545454] text-[#999]"><Magnet size={15} /></IconButton>
        <IconButton label="叠加层" className="ml-[6px] w-[21px] rounded-l bg-[#4772b3] text-white"><Icon name="overlay" /></IconButton>
        <IconButton label="叠加层选项" className="w-[22px]"><Down /></IconButton>
      </div>
      <div className="flex min-h-0 flex-1">
        <div className="relative min-w-0 flex-1 overflow-hidden">
          {NODES.map((node) => <GraphNode key={node.id} node={node} />)}
          <svg className="absolute inset-0 h-full w-full" fill="none" aria-hidden="true">
            <g stroke="#888" strokeWidth="1">
              <path d="M21 5L286 6" strokeDasharray="3 1" />
              <path d="M570 23L637 39M453 279L530 304M536 424L827 442M536 437L827 455M536 450L640 457" />
            </g>
            <g stroke={GEO} strokeWidth="2">
              <path d="M368 0L382 130 423 182M761 326L827 429M957 402L1043 343M626 -1L637 1" />
            </g>
            <path d="M423 182L530 278M625 251L683 339" stroke="#c4f2e4" strokeWidth="2" />
            <path d="M396 153L402 156 402 149" stroke={GEO} strokeWidth="2" />
            <g fill={GEO}>
              <circle cx="382" cy="130" r="2.500" />
              <circle cx="423" cy="182" r="2.500" />
            </g>
            <path d="M570 245L588 263 581 264 576 272z" fill="#14508c" />
            <path d="M570 245L584 258 577 261 574 268z" fill="#d8dde4" />
            <path d="M574 256l14 6-7 4-5 8z" fill="#1d5ca8" />
          </svg>
          <div className="absolute top-[16px] left-0 flex items-center">
            <ChevronRight size={12} className="-ml-1" />
            <Icon name="object" className="ml-[10px]" />
            <span className="ml-[11px]">Plane.002</span>
            <ChevronRight size={14} className="mr-[7px] ml-[15px]" />
            <Icon name="geo" />
            <span className="ml-[10px]">GeometryNodes</span>
            <ChevronRight size={14} className="mr-[7px] ml-[14px]" />
            <Icon name="nodes" />
            <span className="ml-[10px]">固定窗-0.2</span>
          </div>
          <div className="absolute top-[83px] right-[4px] bottom-10 w-[3px] rounded bg-[#303030]" />
          <div className="absolute bottom-[3px] left-[202px] h-[3px] w-[460px] rounded bg-[#303030]" />
        </div>
        <NodeSidebar />
      </div>
    </section>
  );
}

/* ---------- timeline ---------- */

function Timeline() {
  return (
    <section className="flex h-[27px] shrink-0 items-center rounded-md bg-[#303030] pl-[13px] whitespace-nowrap">
      <Icon name="clock" /><Down />
      <nav className="ml-[16px] flex items-center gap-[17px]">
        <button type="button" className="flex items-center gap-[7px]">回放<Down /></button>
        <button type="button" className="-ml-[8px] flex items-center gap-[7px]">插帧<Down /></button>
        <button type="button" className="-ml-[3px]">视图</button>
        <button type="button">标记</button>
      </nav>
      <div className="ml-auto flex items-center gap-[7px] pr-5">
        <IconButton label="自动插帧" className="mr-6 w-5"><span className="h-3 w-3 rounded-full border border-[#888]" /></IconButton>
        <div className="mr-[200px] flex rounded bg-[#444] text-[10px]">
          {['⏮', '◀◀', '◀', '▶', '▶▶', '⏭'].map((g) => <button key={g} type="button" className="h-5 w-[22px]">{g}</button>)}
        </div>
        <input aria-label="当前帧" defaultValue="1" className="h-5 w-[88px] rounded bg-[#444] text-center outline-none" />
        <label className="flex h-5 w-[90px] items-center justify-center gap-3 rounded bg-[#444]">起始<input defaultValue="1" className="w-6 outline-none" /></label>
        <label className="flex h-5 w-[98px] items-center justify-center gap-3 rounded bg-[#444]">结束<input defaultValue="250" className="w-7 outline-none" /></label>
        <input aria-label="步长" defaultValue="1" className="h-5 w-[88px] rounded bg-[#444] text-center outline-none" />
        <button type="button" className="h-5 w-[37px] rounded bg-[#444]">[</button>
        <button type="button" className="h-5 w-[37px] rounded bg-[#444]">]</button>
      </div>
    </section>
  );
}

/* ---------- outliner ---------- */

const OBJECTS = [
  { name: 'Plane' },
  { name: 'Plane.001' },
  { name: 'Plane.002', active: true },
  { name: '平房顶' },
];

function Toggles({ className = 'ml-auto' }: { className?: string }) {
  return (
    <div className={`flex gap-[6px] pr-[13px] text-[#ddd] ${className}`}>
      <button type="button" aria-label="隐藏"><Icon name="eye" /></button>
      <button type="button" aria-label="禁用渲染"><Icon name="photo" /></button>
    </div>
  );
}

function Outliner() {
  return (
    <section className="flex min-h-0 flex-[296] flex-col overflow-hidden rounded-md border-t border-[#454545] bg-[#282828]">
      <div className="flex h-[27px] shrink-0 items-center pr-[9px] pb-px pl-2">
        <EditorType icon="outliner" label="大纲视图" />
        <IconButton label="显示模式" className="ml-[6px] w-[36px] gap-0.5"><Icon name="images" /><Down /></IconButton>
        <div className="mr-auto ml-[50px] flex h-5 w-[126px] items-center gap-[6px] rounded bg-[#1d1d1d] px-1">
          <Search size={16} className="shrink-0 -scale-x-100" />
          <input type="search" aria-label="搜索大纲" placeholder="搜索" className="min-w-0 flex-1 outline-none placeholder:text-[#666]" />
        </div>
        <IconButton label="过滤" className="mr-[6px] w-[32px] gap-1"><Filter size={15} /><Down /></IconButton>
        <IconButton label="新建集合" className="w-[21px] rounded bg-[#444]"><Icon name="newCollection" /></IconButton>
      </div>
      <ul>
        <li className="flex h-[22px] items-center gap-[7px] pl-[25px]"><Icon name="collection" />场景集合</li>
        <li className="flex h-[22px] items-center bg-[#2b2b2b] pl-[25px] text-white">
          <ChevronDown size={14} className="mr-[6px] text-[#aaa]" />
          <span className="mr-[4px] flex h-5 w-5 items-center justify-center rounded bg-[#4f4f4f]"><Icon name="collection" /></span>单体
          <label className="relative ml-auto block h-3 w-3">
            <input type="checkbox" defaultChecked aria-label="启用集合" className="block h-3 w-3 appearance-none rounded-[2px] bg-[#e6e6e6]" />
            <Check size={10} strokeWidth={4} className="pointer-events-none absolute top-px left-px text-[#222]" />
          </label>
          <Toggles className="ml-[9px]" />
        </li>
        {OBJECTS.map((o, i) => (
          <li key={o.name} className={`flex h-[22px] items-center pl-[32px] ${o.active ? 'bg-[#334d80]' : i % 2 ? 'bg-[#2b2b2b]' : ''}`}>
            <span className="mr-[14px] h-full w-px bg-[#555]" />
            <ChevronRight size={14} className="mr-[6px] text-[#aaa]" />
            <span className={`mr-[5px] flex h-5 w-5 items-center justify-center rounded ${o.active ? 'bg-[#66739b]' : ''}`}>
              <Icon name="meshObj" className="!h-[15px] !w-[15px] text-[#dc8c50]" />
            </span>
            <span className={o.active ? 'text-[#efae45]' : ''}>{o.name}</span>
            <Wrench size={15} strokeWidth={1.500} className="mr-[7px] ml-[27px] text-[#7382c8]" />
            <Icon name="mesh" className="text-[#1fc08c]" />
            <Toggles />
          </li>
        ))}
        <li className="flex h-[22px] items-center pl-[25px]">
          <ChevronRight size={14} className="mr-[7px] text-[#aaa]" />
          <Icon name="movie" className="mr-[8px] text-[#c8814e]" />Camera
          <span className="ml-[24px] flex h-5 w-[21px] items-center justify-center rounded bg-[#3f5f54]"><Icon name="movie" className="text-[#1fb080]" /></span>
          <Toggles />
        </li>
      </ul>
    </section>
  );
}

/* ---------- properties ---------- */

const TABS: { icon: string; label: string; color: string; gap?: boolean }[] = [
  { icon: 'tool', label: '工具', color: 'text-[#aaa]' },
  { icon: 'render', label: '渲染', color: 'text-[#aaa]', gap: true },
  { icon: 'output', label: '输出', color: 'text-[#aaa]' },
  { icon: 'imagesLine', label: '视图层', color: 'text-[#aaa]' },
  { icon: 'scene', label: '场景', color: 'text-[#aaa]' },
  { icon: 'world', label: '世界', color: 'text-[#b0405a]' },
  { icon: 'collectionLine', label: '集合', color: 'text-[#ccc]', gap: true },
  { icon: 'square', label: '物体', color: 'text-[#d08250]', gap: true },
  { icon: 'wrench', label: '修改器', color: 'text-[#5f8fe8]' },
  { icon: 'particles', label: '粒子', color: 'text-[#4b68a8]' },
  { icon: 'physics', label: '物理', color: 'text-[#5f80c0]' },
  { icon: 'constraint', label: '约束', color: 'text-[#6e90d0]' },
  { icon: 'mesh', label: '数据', color: 'text-[#1fc08c]' },
  { icon: 'material', label: '材质', color: 'text-[#c04a62]' },
];

function ModifierHeader({ name }: { name: string }) {
  return (
    <div className="flex h-5 items-center pr-[7px] pl-[5px]">
      <button type="button" aria-label="折叠"><ChevronDown size={15} className="text-[#999]" /></button>
      <Icon name="geo" className="mr-[13px] ml-[3px]" />
      <input aria-label="修改器名称" defaultValue={name} className="h-5 min-w-0 flex-1 rounded-l bg-[#1d1d1d] pl-2 outline-none" />
      <IconButton label="在编辑笼" className="w-[22px] bg-[#545454]"><Icon name="mesh" /></IconButton>
      <IconButton label="编辑模式" className="w-[22px] border-l border-[#3a5f98] bg-[#4772b3] text-white"><Icon name="editMode" /></IconButton>
      <IconButton label="实时" className="w-[22px] border-l border-[#3a5f98] bg-[#4772b3] text-white"><Icon name="monitor" /></IconButton>
      <IconButton label="渲染" className="w-[22px] border-l border-[#3a5f98] bg-[#4772b3] text-white"><Camera size={17} fill="white" stroke="#4772b3" /></IconButton>
      <IconButton label="更多" className="w-[21px] rounded-r bg-[#282828]"><ChevronDown size={14} /></IconButton>
      <IconButton label="移除" className="mr-[9px] ml-[2px] w-[22px]"><X size={14} /></IconButton>
      <Grip />
    </div>
  );
}

function TreeRow({ name, users }: { name: string; users?: number }) {
  return (
    <div className="mt-[13px] mr-[10px] ml-[8px] flex h-5">
      <IconButton label="浏览节点树" className="w-[34px] gap-px rounded-l bg-[#282828]"><Icon name="nodes" /><Down /></IconButton>
      <input aria-label="节点组" defaultValue={name} className="h-5 min-w-0 flex-1 bg-[#1d1d1d] pl-2 outline-none" />
      {users && <button type="button" className="w-[58px] bg-[#545454]">{users}</button>}
      <IconButton label="伪用户" className="w-[22px] border-l border-[#444] bg-[#545454] text-[#999]"><Shield size={15} /></IconButton>
      <IconButton label="新建" className="w-[22px] border-l border-[#444] bg-[#545454]"><Icon name="duplicate" /></IconButton>
      <IconButton label="断开" className="w-[22px] rounded-r border-l border-[#444] bg-[#545454]"><X size={14} /></IconButton>
    </div>
  );
}

function Prop({ label, value, color, attr, off }: { label: string; value?: string; color?: string; attr?: boolean; off?: boolean }) {
  const id = useId();
  return (
    <div className={`flex h-5 items-center ${off ? 'opacity-35' : ''}`}>
      <label htmlFor={id} className="flex-1 pr-[10px] text-right">{label}</label>
      {color ? (
        <button id={id} type="button" aria-label={label} className="h-5 w-[173px] rounded-l" style={{ background: color }} />
      ) : (
        <input id={id} defaultValue={value} disabled={off} className={`h-5 w-[173px] bg-[#545454] text-center outline-none ${attr ? 'rounded-l' : 'rounded'}`} />
      )}
      {attr ? (
        <IconButton label="输入属性开关" className="w-[22px] rounded-r bg-[#545454]"><Icon name="grid" className="!w-[18px]" /></IconButton>
      ) : (
        <span className="w-[22px]" />
      )}
      <i className="mr-[17px] ml-[9px] h-1 w-1 rounded-full bg-[#ddd]" />
    </div>
  );
}

const WINDOW_PROPS = [
  ['墙面厚度', '0.380'], ['玻璃宽度', '1.38 m'], ['边框厚度', '0.080'], ['玻璃边框半径', '0.060'],
  ['玻璃厚度', '0.090'], ['左右墙壁', '0.380'], ['玻璃高度', '0.380'], ['下面墙壁高度', '0.200'],
];

function Properties() {
  return (
    <section className="flex min-h-0 flex-[703] flex-col overflow-hidden rounded-md border-t border-[#454545] bg-[#303030]">
      <div className="flex h-[25px] shrink-0 items-center pr-[14px] pl-[9px]">
        <EditorType icon="props" label="属性" />
        <div className="mr-auto ml-[104px] flex h-5 w-[126px] items-center gap-[6px] rounded bg-[#1d1d1d] px-1">
          <Search size={16} className="shrink-0 -scale-x-100" />
          <input type="search" aria-label="搜索属性" placeholder="搜索" className="min-w-0 flex-1 outline-none placeholder:text-[#666]" />
        </div>
        <IconButton label="选项" className="w-4"><Down /></IconButton>
      </div>
      <div className="flex min-h-0 flex-1">
        <nav className="ml-[3px] flex w-7 shrink-0 flex-col bg-[#1d1d1d] pt-[8px]">
          {TABS.map((t) => (
            <button
              key={t.label}
              type="button"
              aria-label={t.label}
              className={`flex h-[30px] w-7 shrink-0 items-center justify-center ${t.color} ${t.gap ? 'mt-2' : ''} ${t.label === '修改器' ? 'bg-[#303030]' : ''}`}
            >
              {t.icon === 'wrench' ? <Wrench size={17} fill="currentColor" strokeWidth={1} /> : <Icon name={t.icon} />}
            </button>
          ))}
        </nav>
        <div className="min-w-0 flex-1 overflow-hidden pr-[10px] pl-[8px]">
          <div className="mt-[7px] flex h-5 items-center pr-1 pl-[3px]">
            <Icon name="object" />
            <span className="ml-[10px]">Plane.002</span>
            <ChevronRight size={14} className="mr-[7px] ml-[16px]" />
            <Icon name="geo" />
            <span className="ml-[10px] flex-1">GeometryNodes</span>
            <Pin size={15} strokeWidth={1.500} className="rotate-45 text-[#999]" />
          </div>
          <button type="button" className="relative mt-[17px] flex h-[21px] w-full items-center justify-center rounded bg-[#545454] pl-5">
            <Plus size={14} className="absolute left-[5px]" />添加修改器
          </button>
          <article className="mt-[10px] h-[239px] rounded bg-[#3d3d3d] pt-[4px]">
            <ModifierHeader name="外墙" />
            <TreeRow name="墙面" users={3} />
            <div className="mt-[7px] flex flex-col gap-[7px]">
              <Prop label="X轴长度" value="6.26 m" />
              <Prop label="高度" value="2 m" />
              <Prop label="单位间隔" value="1.000" />
              <div className="flex flex-col gap-[2px]">
                <Prop label="旋转 X" value="-90°" />
                <Prop label="Y" value="0°" />
                <Prop label="Z" value="0°" />
              </div>
            </div>
            <button type="button" className="mt-[7px] ml-[11px] flex h-5 items-center gap-[6px]"><ChevronRight size={14} />管理</button>
          </article>
          <article className="mt-[3px] rounded border border-[#4f6ca3] bg-[#3d3d3d] pt-[2px] pb-[4px]">
            <ModifierHeader name="GeometryNodes" />
            <TreeRow name="固定窗-0.2" />
            <div className="mt-[7px] flex flex-col gap-[7px]">
              {WINDOW_PROPS.map(([label, value]) => <Prop key={label} label={label} value={value} attr off={label === '玻璃高度'} />)}
              <Prop label="玻璃颜色" color="#cbf086" attr />
              <Prop label="玻璃边框颜色" color="#d8aee0" attr />
            </div>
            <button type="button" className="mt-[7px] ml-[11px] flex h-5 items-center gap-[6px]"><ChevronRight size={14} />管理</button>
          </article>
        </div>
      </div>
    </section>
  );
}

/* ---------- status bar and overlays ---------- */

function MouseHint({ text }: { text: string }) {
  return (
    <span className="flex items-center gap-[6px]">
      <span className="h-4 w-[13px] rounded-md border border-[#777]" />{text}
    </span>
  );
}

function StatusBar() {
  return (
    <footer className="flex h-[25px] shrink-0 items-center justify-between pt-[3px] pr-[13px] pl-[10px] text-[#8a8a8a]">
      <div className="flex gap-[11px]">
        <MouseHint text="选择" /><MouseHint text="平移视图" /><MouseHint text="绘制标注" />
      </div>
      <p>内存: 108.0 MiB | 显存: 2.8/4.0 GiB | 4.4.3</p>
    </footer>
  );
}

function KeyCast() {
  return (
    <div className="pointer-events-none absolute bottom-[122px] left-[35px] text-[19px] font-medium text-white">
      {['Button4 Mouse', 'Wheel Down x3', 'Middle Mouse', 'Wheel Up x3', 'Left Mouse x2'].map((line) => (
        <p key={line} className="leading-6">{line}</p>
      ))}
      <svg width="36" height="46" viewBox="0 0 36 46" className="mt-[8px] -ml-px" fill="none" stroke="white" strokeWidth="1.500" aria-hidden="true">
        <path d="M1 9q0-8 8-8h18q8 0 8 8v18q0 18-17 18T1 27zM1 23h34M12 1v22M24 1v22" />
      </svg>
      <div className="mt-[8px] h-[2px] w-[103px] bg-white" />
      <p className="mt-[8px] leading-6">选择 ('node.select')</p>
    </div>
  );
}

function Watermark() {
  return (
    <div className="pointer-events-none absolute bottom-[8px] left-[11px] flex items-center gap-3 text-white opacity-30">
      <svg width="40" height="40" viewBox="0 0 40 40" aria-hidden="true">
        <path fillRule="evenodd" fill="currentColor" d="M5 0h30q5 0 5 5v30q0 5-5 5H5q-5 0-5-5V5q0-5 5-5zM14 12q-6 8 0 18h12q6-10 0-18-6-4-12 0z" />
      </svg>
      <span className="text-[36px] leading-10 font-bold">tafe.cc</span>
    </div>
  );
}

export default function App() {
  return (
    <div className="relative flex h-screen flex-col overflow-hidden bg-[#181818] font-[Inter,'Noto_Sans_CJK_SC',sans-serif] text-xs text-[#dcdcdc]">
      <TitleBar />
      <TopBar />
      <main className="flex min-h-0 flex-1 gap-[3px]">
        <div className="flex min-w-0 flex-1 flex-col">
          <div className="flex min-h-0 flex-[480] gap-[4px]">
            <Viewport />
            <Spreadsheet />
          </div>
          <div className="mt-[5px] mb-[3px] flex min-h-0 flex-[487] gap-[3px]">
            <ShaderEditor />
            <NodeEditor />
          </div>
          <Timeline />
        </div>
        <div className="flex w-[422px] shrink-0 flex-col gap-[3px]">
          <Outliner />
          <Properties />
        </div>
      </main>
      <StatusBar />
      <KeyCast />
      <Watermark />
      <p className="pointer-events-none absolute inset-x-0 bottom-[5px] text-center text-[56px] leading-[72px] font-medium whitespace-nowrap text-white [text-shadow:0_0_3px_#000,2px_2px_2px_#000,-2px_-2px_2px_#000]">
        我们就可以按之前重采样里面的方法。
      </p>
    </div>
  );
}
